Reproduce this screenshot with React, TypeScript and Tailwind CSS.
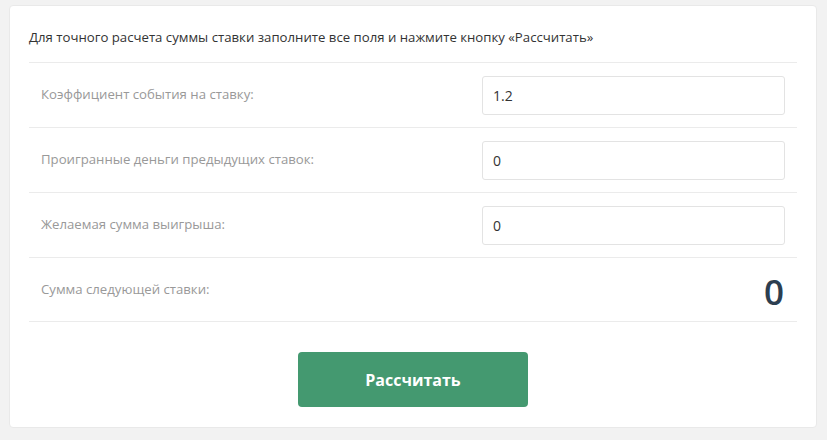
import React from "react";

const rows = [
  { label: "Коэффициент события на ставку:", value: "1.2" },
  { label: "Проигранные деньги предыдущих ставок:", value: "0" },
  { label: "Желаемая сумма выигрыша:", value: "0" },
];

export default function App() {
  return (
    <div
      className="w-[827px] h-[440px] bg-[#f2f2f2] pt-[5px] pl-[9px] pr-[10px]"
      style={{ fontFamily: '"Open Sans", "Noto Sans", sans-serif' }}
    >
      <div className="bg-white border border-[#e9e9e9] rounded-[4px] px-[19px] pt-[19px] pb-[20px]">
        <div className="h-[37px] leading-[24px] text-[13.2px] text-[#333]">
          Для точного расчета суммы ставки заполните все поля и нажмите кнопку «Рассчитать»
        </div>
        {rows.map((r) => (
          <div
            key={r.label}
            className="h-[65px] border-t border-[#ebebeb] px-3 flex items-center justify-between"
          >
            <span className="text-[13.2px] text-[#999]">{r.label}</span>
            <input
              readOnly
              value={r.value}
              className="w-[303px] h-[39px] border border-[#e3e3e3] rounded-[3px] px-[10px] text-[14px] text-[#333] outline-none"
            />
          </div>
        ))}
        <div className="h-[65px] border-y border-[#ebebeb] px-3 flex items-center justify-between">
          <span className="text-[13.2px] text-[#999]">Сумма следующей ставки:</span>
          <span className="text-[35px] leading-none font-semibold text-[#2c3e50] pr-[1px] pt-[3px]">0</span>
        </div>
        <div className="flex justify-center pt-[30px]">
          <button className="w-[230px] h-[55px] bg-[#449970] rounded-[4px] text-white text-[16px] font-bold">
            Рассчитать
          </button>
        </div>
      </div>
    </div>
  );
}
